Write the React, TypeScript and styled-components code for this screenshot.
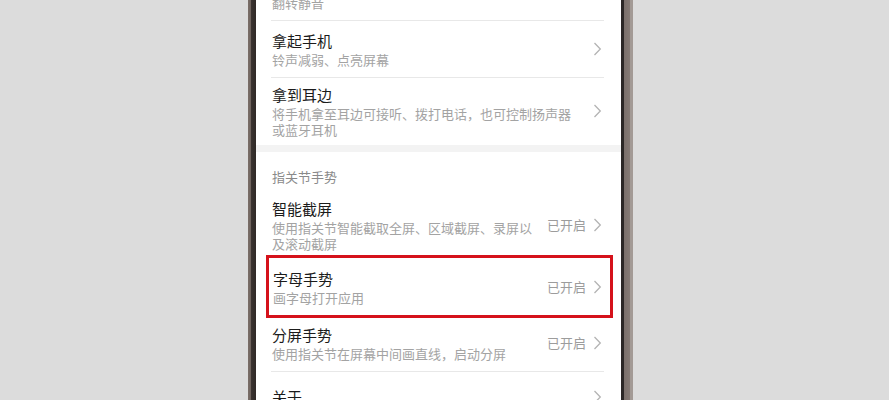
import styled, { createGlobalStyle } from "styled-components";

const GlobalStyle = createGlobalStyle`
  html, body {
    margin: 0;
    padding: 0;
    height: 400px;
    overflow: hidden;
    background: #dcdcdc;
    font-family: "Noto Sans CJK SC", "Noto Sans", sans-serif;
  }
`;

const Stage = styled.div`
  display: flex;
  height: 400px;
  padding-left: 248px;
`;

const PhoneFrame = styled.div`
  display: flex;
  height: 400px;
  padding: 0 12px 0 8px;
  background: linear-gradient(
    to right,
    #7b6f69 0,
    #6e625c 3px,
    #3b3431 3px,
    #2f2926 8px,
    #2b2725 374px,
    #2b2725 376px,
    #7a6f6a 376px,
    #857a74 382px,
    #a39a95 382px,
    #a39a95 386px
  );
`;

const Screen = styled.div`
  width: 365px;
  height: 400px;
  overflow: hidden;
  background: #fff;
`;

const List = styled.div`
  margin-top: -36px;
`;

const Row = styled.div<{ $divider?: boolean; $single?: boolean }>`
  display: flex;
  align-items: center;
  min-height: ${(p) => (p.$single ? "50px" : "57px")};
  margin: 0 17px 0 15px;
  padding: 6px 2px 6px 1px;
  box-sizing: border-box;
  border-bottom: ${(p) => (p.$divider ? "1px solid #e8e8e8" : "none")};
`;

const Highlight = styled.div`
  margin: 0 11px 0 13px;
  outline: 3px solid #d5121b;
  & > div {
    margin: 0 6px 0 3px;
  }
`;

const Texts = styled.div`
  flex: 1;
  min-width: 0;
  margin-right: 12px;
`;

const Title = styled.div`
  font-size: 15px;
  line-height: 22px;
  color: #1b1b1b;
`;

const Sub = styled.div`
  font-size: 13px;
  line-height: 16px;
  color: #a3a3a3;
`;

const Status = styled.span`
  font-size: 13px;
  line-height: 16px;
  color: #9c9c9c;
  margin-right: 7px;
  white-space: nowrap;
`;

const Band = styled.div`
  height: 7px;
  margin-top: 1px;
  background: #f3f3f3;
`;

const SectionHeader = styled.div`
  padding: 17px 16px 7px;
  font-size: 13px;
  line-height: 16px;
  color: #8a8a8a;
`;

const Chevron = () => (
  <svg width="9" height="14" viewBox="0 0 9 14" fill="none">
    <path d="M1.5 1 L7.3 7 L1.5 13" stroke="#b3b3b3" strokeWidth="1.3" />
  </svg>
);

interface ItemProps {
  title: string;
  sub?: string;
  status?: string;
  divider?: boolean;
}

const Item = ({ title, sub, status, divider }: ItemProps) => (
  <Row $divider={divider} $single={!sub}>
    <Texts>
      <Title>{title}</Title>
      {sub && <Sub>{sub}</Sub>}
    </Texts>
    {status && <Status>{status}</Status>}
    <Chevron />
  </Row>
);

export default function App() {
  return (
    <>
      <GlobalStyle />
      <Stage>
        <PhoneFrame>
          <Screen>
            <List>
              <Item title="翻转手机" sub="翻转静音" divider />
              <Item title="拿起手机" sub="铃声减弱、点亮屏幕" divider />
              <Item title="拿到耳边" sub="将手机拿至耳边可接听、拨打电话，也可控制扬声器或蓝牙耳机" />
              <Band />
              <SectionHeader>指关节手势</SectionHeader>
              <Item title="智能截屏" sub="使用指关节智能截取全屏、区域截屏、录屏以及滚动截屏" status="已开启" />
              <Highlight>
                <Item title="字母手势" sub="画字母打开应用" status="已开启" />
              </Highlight>
              <Item title="分屏手势" sub="使用指关节在屏幕中间画直线，启动分屏" status="已开启" divider />
              <Item title="关于" />
            </List>
          </Screen>
        </PhoneFrame>
      </Stage>
    </>
  );
}
